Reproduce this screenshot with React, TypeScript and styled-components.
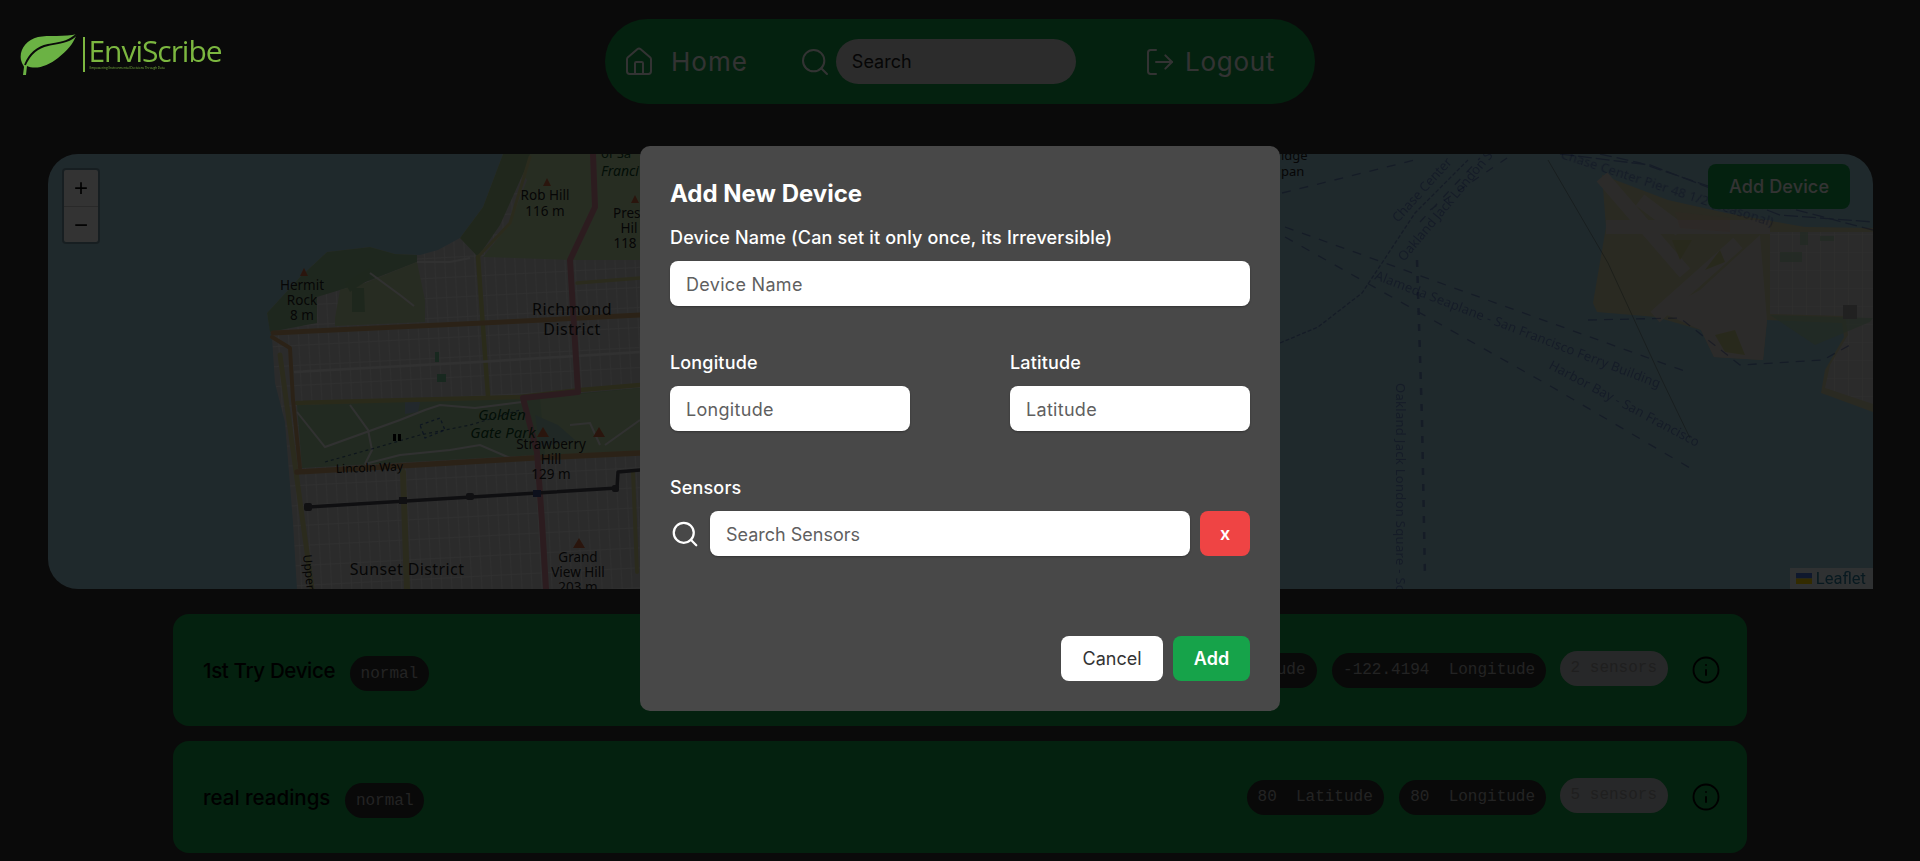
import React from "react";
import styled, { createGlobalStyle } from "styled-components";
import { House, Search, LogOut, Info } from "lucide-react";

const UI = `Inter, "Noto Sans", sans-serif`;
const MONO = `"Liberation Mono", monospace`;

const Global = createGlobalStyle`
  html, body { margin: 0; height: 100%; overflow: hidden; background: #333333; }
  * { box-sizing: border-box; }
  input, button { font-family: ${UI}; }
`;

const Page = styled.div`
  height: 861px;
  overflow: hidden;
  display: flex;
  flex-direction: column;
  font-family: ${UI};
`;

const Header = styled.header`
  display: grid;
  grid-template-columns: 1fr 710px 1fr;
  padding: 19px 0 0;
  height: 104px;
`;

const Logo = styled.div`
  position: relative;
  z-index: 60;
  display: flex;
  align-items: flex-start;
  padding: 14px 0 0 20px;
`;

const LogoBar = styled.span`
  width: 1.5px;
  height: 35px;
  margin: 4px 4px 0 5px;
  background: #7cb740;
`;

const LogoText = styled.div`
  display: flex;
  flex-direction: column;
  color: #7cb740;
`;

const LogoName = styled.span`
  font: 500 30px/31px "Open Sans", sans-serif;
  letter-spacing: -1.05px;
  margin-top: 2px;
`;

const LogoTag = styled.span`
  font: 400 3.1px/4px "Open Sans", sans-serif;
  margin-left: 1px;
  white-space: nowrap;
`;

const Nav = styled.nav`
  height: 85px;
  border-radius: 43px;
  background: #16a34a;
  color: #fff;
  display: flex;
  align-items: center;
  padding: 0 40px 0 18px;
`;

const NavLink = styled.a<{ $gap: number; $tracking: number }>`
  display: flex;
  align-items: center;
  gap: ${(p) => p.$gap}px;
  font-size: 26px;
  letter-spacing: ${(p) => p.$tracking}px;
`;

const NavSearch = styled.div`
  display: flex;
  align-items: center;
  gap: 5px;
  margin-left: 51px;
  margin-right: auto;
`;

const NavInput = styled.input`
  width: 240px;
  height: 45px;
  border: 0;
  border-radius: 23px;
  padding: 0 16px;
  background: #d9d9d9;
  font-size: 18px;
  &::placeholder { color: #222; opacity: 1; }
`;

const MapFrame = styled.section`
  position: relative;
  margin: 50px 47px 0 48px;
  height: 435px;
  border-radius: 30px 30px 0 30px;
  overflow: hidden;
  flex: none;
`;

const MapArt = styled.svg`
  display: block;
  width: 100%;
  height: 100%;
  filter: blur(0.45px);
`;

const ZoomBar = styled.div`
  position: absolute;
  left: 14px;
  top: 14px;
  width: 38px;
  border: 2px solid rgba(0, 0, 0, 0.25);
  border-radius: 4px;
  background: #fff;
  background-clip: padding-box;
  display: flex;
  flex-direction: column;
`;

const ZoomBtn = styled.a`
  height: 36px;
  display: flex;
  align-items: center;
  justify-content: center;
  font: 400 24px "Liberation Sans", sans-serif;
  color: #000;
  & + & { border-top: 1px solid #ccc; }
`;

const AddDevice = styled.button`
  position: absolute;
  right: 23px;
  top: 10px;
  width: 142px;
  height: 45px;
  border: 0;
  border-radius: 8px;
  background: #16a34a;
  color: #fff;
  font-size: 18px;
  font-weight: 500;
  letter-spacing: 0.15px;
`;

const Attribution = styled.div`
  position: absolute;
  right: 0;
  bottom: 0;
  height: 21px;
  padding: 0 7px 0 6px;
  display: flex;
  align-items: center;
  gap: 4px;
  background: rgba(255, 255, 255, 0.8);
  color: #2a7f9e;
  font: 400 16.5px Roboto, sans-serif;
`;

const Devices = styled.div`
  margin: 25px 173px 0;
  display: flex;
  flex-direction: column;
  gap: 15px;
`;

const Row = styled.article`
  height: 112px;
  flex: none;
  border-radius: 16px;
  background: #16a34a;
  display: flex;
  align-items: center;
  padding: 0 26.5px 0 30px;
`;

const DeviceName = styled.h3<{ $tracking?: number }>`
  margin: 0;
  font-size: 20.5px;
  font-weight: 500;
  letter-spacing: ${(p) => p.$tracking ?? 0}px;
  color: #000;
`;

const Pill = styled.span`
  height: 35px;
  padding: 0 11px;
  border-radius: 18px;
  display: inline-flex;
  align-items: center;
  white-space: pre;
  font: 400 16px ${MONO};
  background: #2e2e2e;
  color: #b0b0b0;
`;

const SensorPill = styled(Pill)`
  background: #c4c6ca;
  color: #9a9a9a;
  margin: -4px 0 0 -2px;
`;

const StatusPill = styled(Pill)`
  margin-left: 15px;
  margin-top: 7px;
  padding: 0 10.5px;
`;

const Spec = styled.div`
  margin-left: auto;
  display: flex;
  align-items: center;
  gap: 15.5px;
`;

const InfoBtn = styled.span`
  display: flex;
  margin-left: 7px;
  color: #000;
`;

const Overlay = styled.div`
  position: fixed;
  inset: 0;
  z-index: 50;
  background: rgba(0, 0, 0, 0.8);
  display: flex;
  align-items: center;
  justify-content: center;
  padding-bottom: 4px;
`;

const Modal = styled.form`
  width: 640px;
  height: 565px;
  border-radius: 10px;
  padding: 30px;
  background: #484848;
  color: #fff;
`;

const ModalTitle = styled.h2`
  margin: 0 0 14px;
  font-size: 24px;
  line-height: 36px;
  font-weight: 700;
`;

const Field = styled.label`
  display: block;
`;

const FieldLabel = styled.span`
  display: block;
  height: 24px;
  font-size: 18px;
  line-height: 24px;
  font-weight: 500;
  letter-spacing: 0.16px;
`;

const TextInput = styled.input`
  display: block;
  width: 100%;
  height: 45px;
  margin-top: 11px;
  padding: 2px 16px 0;
  border: 0;
  border-radius: 8px;
  background: #fff;
  font-size: 18px;
  letter-spacing: 0.3px;
  color: #222;
  box-shadow: 0 1px 2px rgba(0, 0, 0, 0.3);
  &::placeholder { color: #5f5f5f; opacity: 1; }
`;

const CoordGrid = styled.div`
  display: grid;
  grid-template-columns: 240px 240px;
  justify-content: space-between;
  margin-top: 45px;
`;

const SensorsBlock = styled.div`
  margin-top: 45px;
`;

const SensorRow = styled.div`
  display: flex;
  align-items: center;
  gap: 10px;
  margin-top: 11px;
  & svg { flex: none; width: 30px; height: 30px; }
  & input { margin-top: 0; flex: 1; width: auto; letter-spacing: 0; }
`;

const Clear = styled.button`
  width: 50px;
  height: 45px;
  border: 0;
  border-radius: 8px;
  background: #ef4444;
  color: #fff;
  font-size: 18px;
  font-weight: 600;
`;

const Actions = styled.div`
  display: flex;
  justify-content: flex-end;
  gap: 10px;
  margin-top: 80px;
`;

const ActionBtn = styled.button<{ $primary?: boolean }>`
  height: 45px;
  width: ${(p) => (p.$primary ? "77px" : "102px")};
  border: 0;
  border-radius: 8px;
  background: ${(p) => (p.$primary ? "#16a34a" : "#fff")};
  color: ${(p) => (p.$primary ? "#fff" : "#333")};
  font-size: 18px;
  font-weight: ${(p) => (p.$primary ? 600 : 400)};
`;

const WEST =
  "M503 154 L483 207 L460 238 L438 250 L420 255 L395 254 L370 247 L327 252 L300 277 L267 313 L270 330 L272 337 L275 383 L285 422 L293 522 L297 589 L640 589 L640 154 Z";
const EAST =
  "M1602 175 L1668 200 L1726 213 L1805 227 L1873 228 L1873 412 L1821 393 L1825 370 L1844 337 L1842 323 L1767 320 L1763 360 L1714 357 L1701 330 L1656 317 L1597 312 L1593 303 L1606 227 Z";

function MapDrawing() {
  const label = { fontFamily: "'Noto Sans', sans-serif", fill: "#222", textAnchor: "middle" as const };
  const ferry = { fontFamily: "'Noto Sans', sans-serif", fill: "#1e2fa0", fontSize: 13 };
  return (
    <MapArt viewBox="48 154 1825 435" preserveAspectRatio="none">
      <defs>
        <pattern id="blocks" width="10" height="20" patternUnits="userSpaceOnUse" patternTransform="rotate(-3)">
          <rect width="10" height="20" fill="#d8d8d8" />
          <path d="M0 0H10M0 0V20" stroke="#f4f4f4" strokeWidth="1.3" />
        </pattern>
        <pattern id="eastBlocks" width="14" height="18" patternUnits="userSpaceOnUse">
          <rect width="14" height="18" fill="#d8d6d5" />
          <path d="M0 0H14M0 0V18" stroke="#ececec" strokeWidth="1.2" />
        </pattern>
      </defs>
      <rect x="48" y="154" width="1825" height="435" fill="#9ccadb" />

      <path d={WEST} fill="url(#blocks)" />
      <path d="M503 154 L640 154 L640 260 L570 260 L483 257 L510 223 L527 180 Z" fill="#c2dfac" />
      <path d="M503 154 L483 207 L460 238 L478 257 L500 225 L527 165 L530 154 Z" fill="#a0c48c" />
      <path d="M267 313 L270 332 L317 323 L317 297 L363 283 L417 262 L417 255 L395 254 L370 247 L327 252 L300 277 Z" fill="#98c494" />
      <path d="M335 318 L340 290 L365 283 L417 262 L425 300 L425 322 L335 326 Z" fill="#c4daa8" />
      <path d="M345 283 L370 268 L368 280 L350 292 Z M352 288 L364 288 L365 312 L352 312 Z" fill="#98c392" />
      <path d="M297 405 L523 398 L640 388 L640 452 L537 455 L302 468 Z" fill="#a8d3a4" />
      <path d="M540 398 L640 388 L640 452 L545 455 Z" fill="#bcdca8" />
      <path d="M535 415 L558 425 L575 440 L540 447 Z" fill="#9fc5b8" />
      <path d="M405 402 L420 402 L418 412 L405 414 Z" fill="#aac8da" />
      <path d="M435 352 L439 352 L439 362 L435 362 Z M437 374 L446 374 L446 382 L437 382 Z" fill="#79c79a" />

      <g fill="none" stroke="#f4f4f4" strokeWidth="2">
        <path d="M297 412 L325 447 L400 420 L425 410 L440 405 L475 408 L522 402" />
        <path d="M350 405 L368 430 L372 450 L365 464" />
        <path d="M365 464 L400 455 L450 450 L480 445 L510 458" />
        <path d="M570 425 L590 423 L600 445 M605 445 L640 420" />
        <path d="M370 273 L400 295 L414 306 M417 262 L450 262 L470 258" />
      </g>
      <path d="M325 462 L375 448 L420 435 L470 425 L520 410" fill="none" stroke="#1a3a7a" strokeWidth="1.2" strokeDasharray="3 3" opacity="0.7" />
      <path d="M420 425 L440 418 L445 430 L425 438 Z" fill="none" stroke="#1a3ba0" strokeWidth="1.3" strokeDasharray="3 3" opacity="0.7" />

      <g fill="none" strokeLinecap="round" strokeLinejoin="round">
        <path d="M478 257 L510 223 L530 157" stroke="#d8d890" strokeWidth="3" />
        <path d="M478 257 L487 383 L488 396" stroke="#d0d480" strokeWidth="4.5" />
        <path d="M577 283 L640 278" stroke="#d8d890" strokeWidth="3.5" />
        <path d="M403 472 L407 589" stroke="#d8d890" strokeWidth="6" />
        <path d="M633 472 L637 572" stroke="#d8d890" strokeWidth="4" />
        <path d="M297 403 L520 397 L580 390 L640 385" stroke="#cfd084" strokeWidth="4.5" />
        <path d="M295 372 L478 362 L640 352" stroke="#f4f4f4" strokeWidth="2.5" />
        <path d="M273 333 L397 327 L483 323 L640 315" stroke="#d6ac74" strokeWidth="5" />
        <path d="M272 337 L290 348 L293 400 L300 468" stroke="#d6ac74" strokeWidth="4" />
        <path d="M280 355 L293 450 L312 589" stroke="#d8d490" strokeWidth="5" />
        <path d="M297 472 L533 458 L640 453" stroke="#d8ac76" strokeWidth="5.5" />
        <path d="M593 154 L595 207 L570 260 L573 310 L578 392 L523 398 L537 452 L542 522 L546 589" stroke="#dc8c9c" strokeWidth="6" />
        <path d="M308 507 L537 493 L617 488 L618 472 L640 470" stroke="#4a4a55" strokeWidth="3.5" />
      </g>
      <g fill="#50505a">
        <rect x="304" y="503" width="8" height="8" rx="2" />
        <rect x="399" y="497" width="8" height="7" />
        <rect x="466" y="493" width="8" height="7" rx="2" />
        <rect x="533" y="490" width="8" height="7" fill="#44508a" />
        <rect x="612" y="485" width="7" height="7" rx="2" />
        <rect x="393" y="434" width="3" height="7" fill="#000" />
        <rect x="398" y="434" width="3" height="7" fill="#000" />
      </g>

      <g fill="#d26a40">
        <path d="M543 186 L551 186 L547 178 Z" />
        <path d="M300 276 L308 276 L304 268 Z" />
        <path d="M631 203 L639 203 L635 195 Z" />
        <path d="M537 437 L549 437 L543 427 Z" />
        <path d="M593 437 L605 437 L599 427 Z" />
        <path d="M573 548 L585 548 L579 538 Z" />
      </g>

      <g {...label} fontSize="13.5">
        <text x="545" y="200">Rob Hill</text>
        <text x="545" y="216">116 m</text>
        <text x="302" y="290">Hermit</text>
        <text x="302" y="305">Rock</text>
        <text x="302" y="320">8 m</text>
        <text x="613" y="218" textAnchor="start">Presi</text>
        <text x="629" y="233">Hil</text>
        <text x="625" y="248">118</text>
        <text x="551" y="449">Strawberry</text>
        <text x="551" y="464">Hill</text>
        <text x="551" y="479">129 m</text>
        <text x="578" y="562">Grand</text>
        <text x="578" y="577">View Hill</text>
        <text x="578" y="592">203 m</text>
      </g>
      <g {...label} fontSize="16">
        <text x="572" y="315" letterSpacing="0.5">Richmond</text>
        <text x="572" y="335" letterSpacing="0.5">District</text>
        <text x="407" y="575" letterSpacing="0.4">Sunset District</text>
      </g>
      <g {...label} fontSize="15" fontStyle="italic" fill="#0f4a25">
        <text x="502" y="420">Golden</text>
        <text x="503" y="438">Gate Park</text>
        <text x="601" y="176" textAnchor="start" fontSize="14">Franci</text>
      </g>
      <text x="601" y="158" fontFamily="'Noto Sans', sans-serif" fontSize="13" fill="#0f4a25">of Sa</text>
      <text x="336" y="473" fontFamily="'Noto Sans', sans-serif" fontSize="12" fill="#111" transform="rotate(-2 336 473)">Lincoln Way</text>
      <text fontFamily="'Noto Sans', sans-serif" fontSize="12" fill="#222" transform="translate(303 555) rotate(84)">Upper G</text>
      <text x="1281" y="160" fontFamily="'Noto Sans', sans-serif" fontSize="13" fill="#222">idge</text>
      <text x="1281" y="176" fontFamily="'Noto Sans', sans-serif" fontSize="13" fill="#222">pan</text>

      <path d={EAST} fill="#d0d0a8" />
      <path d="M1602 177 L1685 273 M1606 227 L1770 227 M1738 243 L1655 317 M1680 230 L1640 200" stroke="#dcd8d0" strokeWidth="14" fill="none" />
      <path d="M1660 312 L1700 290 L1760 235 L1767 320 L1763 360 L1714 357 L1701 330 Z" fill="#dcd8d0" />
      <path d="M1672 240 L1680 260 L1692 240 Z M1720 250 L1705 270 L1725 262 Z" fill="#c8ca8c" />
      <path d="M1715 335 L1735 330 L1745 355 L1725 352 Z" fill="#c8ca8c" />
      <path d="M1675 212 L1730 218 L1730 232 L1680 228 Z" fill="#e8c4b0" opacity="0.5" />
      <path d="M1770 232 L1873 232 L1873 404 L1825 388 L1830 365 L1848 335 L1845 316 L1770 314 Z" fill="url(#eastBlocks)" />
      <path d="M1780 252 L1802 252 L1802 262 L1780 262 Z M1800 232 L1808 232 L1808 245 L1800 245 Z M1820 236 L1834 236 L1834 241 L1820 241 Z M1815 345 L1870 322 L1873 318 L1770 315 Z" fill="#a8d2aa" opacity="0.7" />
      <rect x="1843" y="305" width="14" height="14" fill="#a4a4a4" />

      <g fill="none" stroke="#2b3f9e" strokeWidth="1.3" opacity="0.45">
        <path d="M1282 193 L1415 160" strokeDasharray="9 9" />
        <path d="M1285 227 L1690 373" strokeDasharray="9 9" />
        <path d="M1285 237 L1552 387 L1690 468" strokeDasharray="9 10" />
        <path d="M1417 260 L1422 420 L1425 578" strokeWidth="2.5" strokeDasharray="7 9" />
        <path d="M1600 154 L1640 163 L1720 190 L1873 230" strokeDasharray="12 5" />
        <path d="M1560 154 L1650 165 L1780 215 L1873 222" strokeDasharray="14 4" />
        <path d="M1280 343 L1318 327 L1362 293 L1382 263 L1415 213 L1468 160" strokeDasharray="4 2" />
        <path d="M1420 222 L1480 158 M1430 210 L1510 156" strokeDasharray="8 9" />
        <path d="M1588 320 L1680 318 L1740 365 L1823 360 L1850 345" strokeDasharray="9 7" />
      </g>
      <path d="M1548 160 L1608 263 L1662 380 L1690 438" fill="none" stroke="#4f6157" strokeWidth="1" opacity="0.5" />
      <g {...ferry} opacity="0.4">
        <text transform="translate(1398 223) rotate(-48)">Chase Center</text>
        <text transform="translate(1404 262) rotate(-50)">Oakland Jack London Square</text>
        <text transform="translate(1374 279) rotate(21)" letterSpacing="0.2">Alameda Seaplane - San Francisco Ferry Building</text>
        <text transform="translate(1548 368) rotate(28)" letterSpacing="0.2">Harbor Bay - San Francisco</text>
        <text transform="translate(1560 158) rotate(18)" letterSpacing="0.2">Chase Center Pier 48 1/2 (Seasonal)</text>
        <text transform="translate(1396 383) rotate(90)" letterSpacing="0.3">Oakland Jack London Square - South</text>
      </g>
    </MapArt>
  );
}

function LeafMark() {
  return (
    <svg width="58" height="43" viewBox="20 33 58 43">
      <path d="M77 34 C65 37 48 35 38 37 C26 40 19 50 21 60 C22 64 24 66 24 67 L23 75 L26 75 L27 66 C36 70 48 66 58 58 C68 50 73 44 77 34 Z" fill="#6bb244" />
      <path d="M25 65 C30 53 38 47 48 45 C58 43 70 42 77 34" fill="none" stroke="#0a0a0a" strokeWidth="1.9" />
    </svg>
  );
}

export default function App() {
  return (
    <Page>
      <Global />
      <Header>
        <Logo>
          <LeafMark />
          <LogoBar />
          <LogoText>
            <LogoName>EnviScribe</LogoName>
            <LogoTag>Empowering Environmental Decisions Through Data</LogoTag>
          </LogoText>
        </Logo>
        <Nav>
          <NavLink $gap={16} $tracking={1}>
            <House size={32} strokeWidth={1.5} />
            Home
          </NavLink>
          <NavSearch>
            <Search size={32} strokeWidth={1.5} />
            <NavInput placeholder="Search" />
          </NavSearch>
          <NavLink $gap={9} $tracking={0.7}>
            <LogOut size={32} strokeWidth={1.5} />
            Logout
          </NavLink>
        </Nav>
        <div />
      </Header>

      <MapFrame>
        <MapDrawing />
        <ZoomBar>
          <ZoomBtn>+</ZoomBtn>
          <ZoomBtn>−</ZoomBtn>
        </ZoomBar>
        <AddDevice>Add Device</AddDevice>
        <Attribution>
          <svg width="16" height="11" viewBox="0 0 16 11">
            <rect width="16" height="5.5" fill="#4C7BE1" />
            <rect y="5.5" width="16" height="5.5" fill="#FFD500" />
          </svg>
          Leaflet
        </Attribution>
      </MapFrame>

      <Devices>
        <Row>
          <DeviceName $tracking={-0.35}>1st Try Device</DeviceName>
          <StatusPill>normal</StatusPill>
          <Spec>
            <Pill>{"37.7749  Latitude"}</Pill>
            <Pill>{"-122.4194  Longitude"}</Pill>
            <SensorPill>2 sensors</SensorPill>
            <InfoBtn><Info size={30} strokeWidth={1.5} /></InfoBtn>
          </Spec>
        </Row>
        <Row>
          <DeviceName>real readings</DeviceName>
          <StatusPill>normal</StatusPill>
          <Spec>
            <Pill>{"80  Latitude"}</Pill>
            <Pill>{"80  Longitude"}</Pill>
            <SensorPill>5 sensors</SensorPill>
            <InfoBtn><Info size={30} strokeWidth={1.5} /></InfoBtn>
          </Spec>
        </Row>
      </Devices>

      <Overlay>
        <Modal>
          <ModalTitle>Add New Device</ModalTitle>
          <Field>
            <FieldLabel>Device Name (Can set it only once, its Irreversible)</FieldLabel>
            <TextInput placeholder="Device Name" />
          </Field>
          <CoordGrid>
            <Field>
              <FieldLabel>Longitude</FieldLabel>
              <TextInput placeholder="Longitude" />
            </Field>
            <Field>
              <FieldLabel>Latitude</FieldLabel>
              <TextInput placeholder="Latitude" />
            </Field>
          </CoordGrid>
          <SensorsBlock>
            <FieldLabel>Sensors</FieldLabel>
            <SensorRow>
              <Search strokeWidth={1.8} />
              <TextInput placeholder="Search Sensors" />
              <Clear type="button">x</Clear>
            </SensorRow>
          </SensorsBlock>
          <Actions>
            <ActionBtn type="button">Cancel</ActionBtn>
            <ActionBtn type="button" $primary>Add</ActionBtn>
          </Actions>
        </Modal>
      </Overlay>
    </Page>
  );
}
